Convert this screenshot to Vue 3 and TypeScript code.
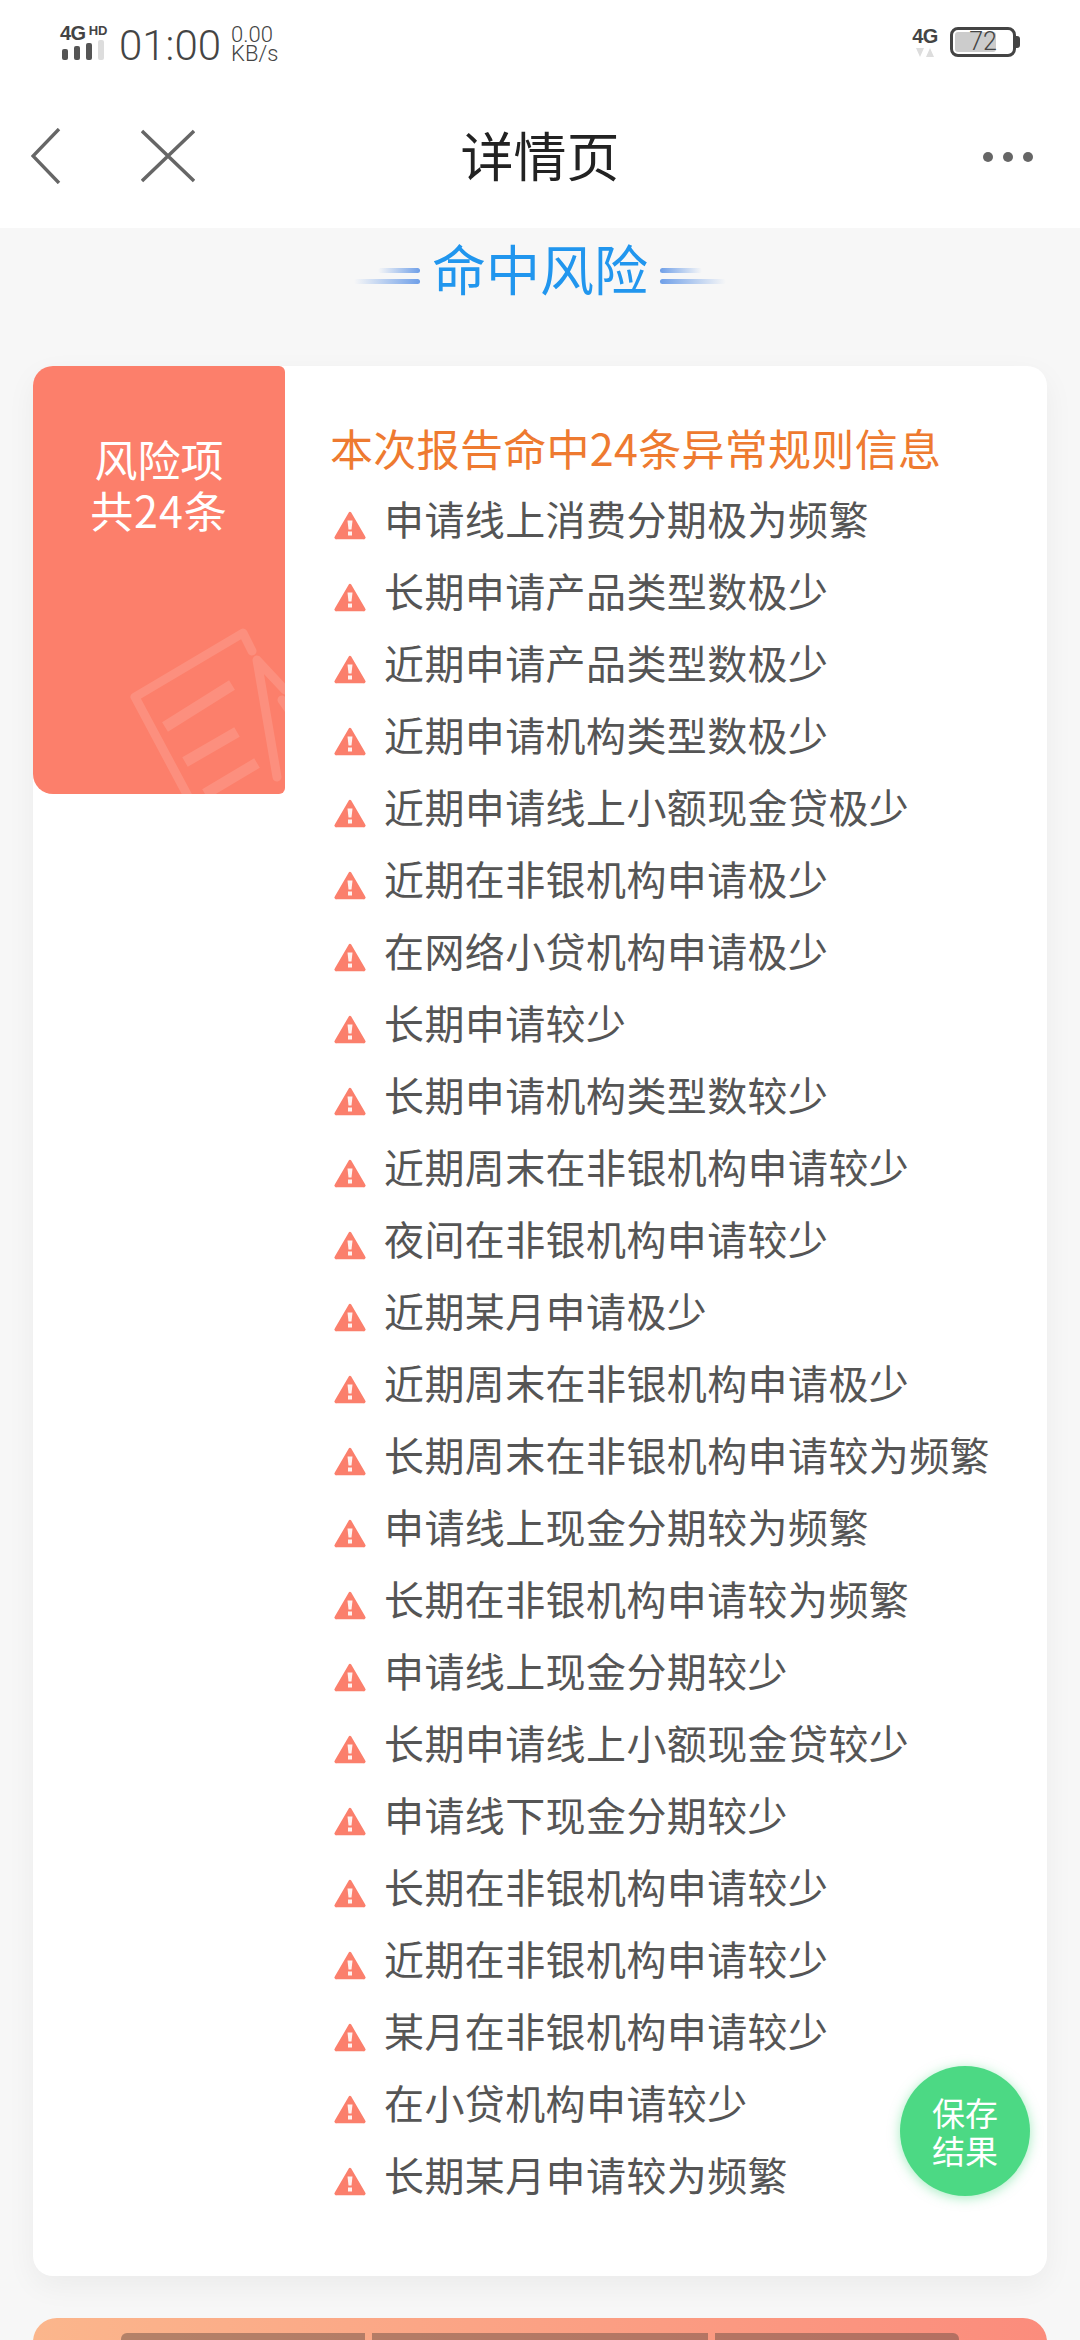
<template>
  <div class="page">
    <header class="top">
      <div class="status">
        <div class="status-left">
          <div class="signal">
            <div class="net"><b>4G</b><i>HD</i></div>
            <div class="bars"><span></span><span></span><span></span><span class="off"></span></div>
          </div>
          <span class="clock">01:00</span>
          <div class="speed"><span>0.00</span><span>KB/s</span></div>
        </div>
        <div class="status-right">
          <div class="net-right">
            <b>4G</b>
            <svg width="18" height="9" viewBox="0 0 18 9"><path d="M0 0h8L4 9zM10 9l4-9 4 9z" fill="#ddd" /></svg>
          </div>
          <div class="battery">
            <div class="battery-fill"></div>
            <span>72</span>
          </div>
          <div class="battery-tip"></div>
        </div>
      </div>
      <nav class="nav">
        <div class="nav-icons">
          <svg width="30" height="56" viewBox="0 0 30 56"><path d="M28 1L2 28l26 27" fill="none" stroke="#666" stroke-width="3.400" /></svg>
          <svg width="54" height="54" viewBox="0 0 54 54"><path d="M1 2l52 50M53 2L1 52" fill="none" stroke="#666" stroke-width="3.400" /></svg>
        </div>
        <h1>详情页</h1>
        <div class="dots"><span></span><span></span><span></span></div>
      </nav>
    </header>

    <main class="content">
      <div class="section-title">
        <div class="wing left"><span></span><span></span></div>
        <h2>命中风险</h2>
        <div class="wing right"><span></span><span></span></div>
      </div>

      <section class="card">
        <aside class="tag">
          <div>风险项</div>
          <div class="tag-count">共24条</div>
          <svg class="tag-art" width="252" height="428" viewBox="33 366 252 428">
            <g fill="none" stroke="#fff" stroke-opacity=".13" stroke-linecap="round" stroke-linejoin="round" stroke-width="9">
              <path d="M190 800L135 697 243 633l9 18" />
              <path d="M257 660l28 30M257 660l20 117M282 700l10 14" />
            </g>
            <g fill="none" stroke="#fff" stroke-opacity=".13" stroke-width="11">
              <path d="M165 727l67-42M185 762l52-30M205 794l52-31" />
            </g>
          </svg>
        </aside>
        <div class="body">
          <h3>本次报告命中24条异常规则信息</h3>
          <ul>
            <li v-for="(rule, i) in rules" :key="i">
              <svg class="warn" width="32" height="30" viewBox="0 0 32 30">
                <path d="M16 3L30 27a.5 .5 0 0 1-.5 1H2.500a.5 .5 0 0 1-.5-1z" fill="#fb7f6c" stroke="#fb7f6c" stroke-width="2.500" stroke-linejoin="round" />
                <path d="M13.500 10.500h5l-1 9h-3zM14 21.500h4v4h-4z" fill="#fff" fill-opacity=".9" />
              </svg>
              <span>{{ rule }}</span>
            </li>
          </ul>
        </div>
      </section>

      <section class="next">
        <div class="next-bar">
          <span></span><span></span><span></span>
        </div>
      </section>
    </main>

    <button class="save">保存<br />结果</button>
  </div>
</template>

<script setup lang="ts">
const rules: string[] = [
  '申请线上消费分期极为频繁',
  '长期申请产品类型数极少',
  '近期申请产品类型数极少',
  '近期申请机构类型数极少',
  '近期申请线上小额现金贷极少',
  '近期在非银机构申请极少',
  '在网络小贷机构申请极少',
  '长期申请较少',
  '长期申请机构类型数较少',
  '近期周末在非银机构申请较少',
  '夜间在非银机构申请较少',
  '近期某月申请极少',
  '近期周末在非银机构申请极少',
  '长期周末在非银机构申请较为频繁',
  '申请线上现金分期较为频繁',
  '长期在非银机构申请较为频繁',
  '申请线上现金分期较少',
  '长期申请线上小额现金贷较少',
  '申请线下现金分期较少',
  '长期在非银机构申请较少',
  '近期在非银机构申请较少',
  '某月在非银机构申请较少',
  '在小贷机构申请较少',
  '长期某月申请较为频繁',
]
</script>

<style>
html, body { background: #f7f7f7; }
</style>

<style scoped>
.page {
  position: relative;
  width: 1080px;
  height: 2340px;
  overflow: hidden;
  background: #f7f7f7;
  font-family: "Noto Sans CJK SC", "Liberation Sans", sans-serif;
}
.top {
  height: 228px;
  background: #fff;
}
.status {
  height: 86px;
  padding: 0 60px 0 60px;
  box-sizing: border-box;
  display: flex;
  justify-content: space-between;
  align-items: center;
  color: #444;
}
.status-left, .status-right { display: flex; align-items: center; }
.status-right { margin-top: -2px; }
.signal { width: 46px; margin-right: 13px; }
.net { display: flex; height: 14px; font: 700 20px/14px "Liberation Sans", sans-serif; }
.net b { font-weight: 700; letter-spacing: -0.5px; }
.net i { font-style: normal; font-size: 13px; line-height: 10px; margin-left: 3px; }
.bars { display: flex; align-items: flex-end; gap: 6px; height: 20px; padding-left: 2px; }
.bars span { width: 6px; height: 11px; border-radius: 2px; background: #555; }
.bars span:nth-child(2) { height: 14px; }
.bars span:nth-child(3) { height: 17px; }
.bars span.off { height: 20px; background: #ddd; }
.clock { padding-top: 6px; font: 300 42px/44px "Roboto", sans-serif; }
.speed {
  display: flex;
  flex-direction: column;
  margin-left: 10px;
  padding-top: 2px;
  font: 300 22px/19px "Roboto", sans-serif;
}
.net-right { display: flex; flex-direction: column; align-items: center; width: 24px; margin-right: 13px; }
.net-right b { font: 700 20px/17px "Liberation Sans", sans-serif; letter-spacing: -0.5px; }
.net-right svg { margin-top: 3px; }
.battery {
  position: relative;
  width: 66px;
  height: 30px;
  box-sizing: border-box;
  border: 3px solid #444;
  border-radius: 8px;
  text-align: center;
  font: 300 25px/24px "Roboto", sans-serif;
  color: #444;
}
.battery span { position: relative; }
.battery-fill {
  position: absolute;
  left: 2px;
  top: 2px;
  bottom: 2px;
  width: 41px;
  background: #ccc;
  border-radius: 3px;
}
.battery-tip { width: 4px; height: 12px; background: #444; border-radius: 0 3px 3px 0; }
.nav {
  position: relative;
  height: 142px;
  padding: 0 47px 0 31px;
  display: flex;
  align-items: center;
  justify-content: space-between;
}
.nav-icons { display: flex; align-items: center; gap: 80px; margin-top: -2px; }
.nav h1 {
  position: absolute;
  left: 0;
  right: 0;
  top: 32px;
  margin: 0;
  text-align: center;
  font-size: 53px;
  line-height: 72px;
  font-weight: 400;
  color: #222;
}
.dots { display: flex; gap: 10px; }
.dots span { width: 10px; height: 10px; border-radius: 50%; background: #666; }
.content { padding: 0 33px; }
.section-title {
  height: 138px;
  display: flex;
  justify-content: center;
  align-items: flex-start;
  gap: 12px;
}
.section-title h2 {
  margin: 0;
  padding-top: 5px;
  font-size: 54px;
  line-height: 70px;
  font-weight: 400;
  color: #2196ee;
}
.wing { display: flex; flex-direction: column; gap: 6px; padding-top: 40px; width: 70px; }
.wing span { height: 5px; width: 42px; border-radius: 3px; }
.wing span:last-child { height: 5px; width: 66px; }
.wing.left { align-items: flex-end; }
.wing.left span { background: linear-gradient(90deg, rgba(90, 140, 230, 0), #6f9fe8); }
.wing.right span { background: linear-gradient(90deg, #6f9fe8, rgba(90, 140, 230, 0)); }
.card {
  display: flex;
  height: 1910px;
  background: #fff;
  border-radius: 20px;
  box-shadow: 0 10px 30px rgba(0, 0, 0, 0.05);
}
.tag {
  position: relative;
  flex: none;
  width: 252px;
  height: 428px;
  box-sizing: border-box;
  padding-top: 67px;
  overflow: hidden;
  border-radius: 20px 6px 6px 20px;
  background: #fc7f6b;
  color: #fff;
  text-align: center;
  font-size: 43px;
  line-height: 51px;
}
.tag-count { letter-spacing: 1px; }
.tag-art { position: absolute; left: 0; top: 0; }
.body { flex: 1; padding: 52px 0 0 45px; }
.body h3 {
  margin: 0 0 6px;
  font-size: 43px;
  letter-spacing: 0.3px;
  line-height: 58px;
  font-weight: 400;
  color: #ee7a30;
}
.body ul { margin: 0; padding: 0; list-style: none; }
.body li {
  display: flex;
  align-items: center;
  height: 72px;
  font-size: 40px;
  letter-spacing: 0.4px;
  color: #555;
}
.warn { flex: none; margin: 14px 18px 0 4px; }
.next {
  height: 100px;
  margin-top: 42px;
  padding-top: 15px;
  box-sizing: border-box;
  border-radius: 24px 24px 0 0;
  background: linear-gradient(90deg, #fbb68c, #fb8c7c);
}
.next-bar { display: flex; gap: 7px; margin: 0 88px; }
.next-bar span { height: 40px; background: rgba(110, 80, 70, 0.5); }
.next-bar span:nth-child(1) { width: 244px; border-radius: 6px 0 0 0; }
.next-bar span:nth-child(2) { width: 337px; }
.next-bar span:nth-child(3) { width: 244px; border-radius: 0 6px 0 0; }
.save {
  position: absolute;
  left: 900px;
  top: 2066px;
  width: 130px;
  height: 130px;
  padding: 0;
  border: 0;
  border-radius: 50%;
  background: #4cd984;
  box-shadow: 0 2px 12px rgba(76, 217, 132, 0.5);
  color: #fff;
  font-family: inherit;
  font-size: 33px;
  line-height: 38px;
}
</style>
